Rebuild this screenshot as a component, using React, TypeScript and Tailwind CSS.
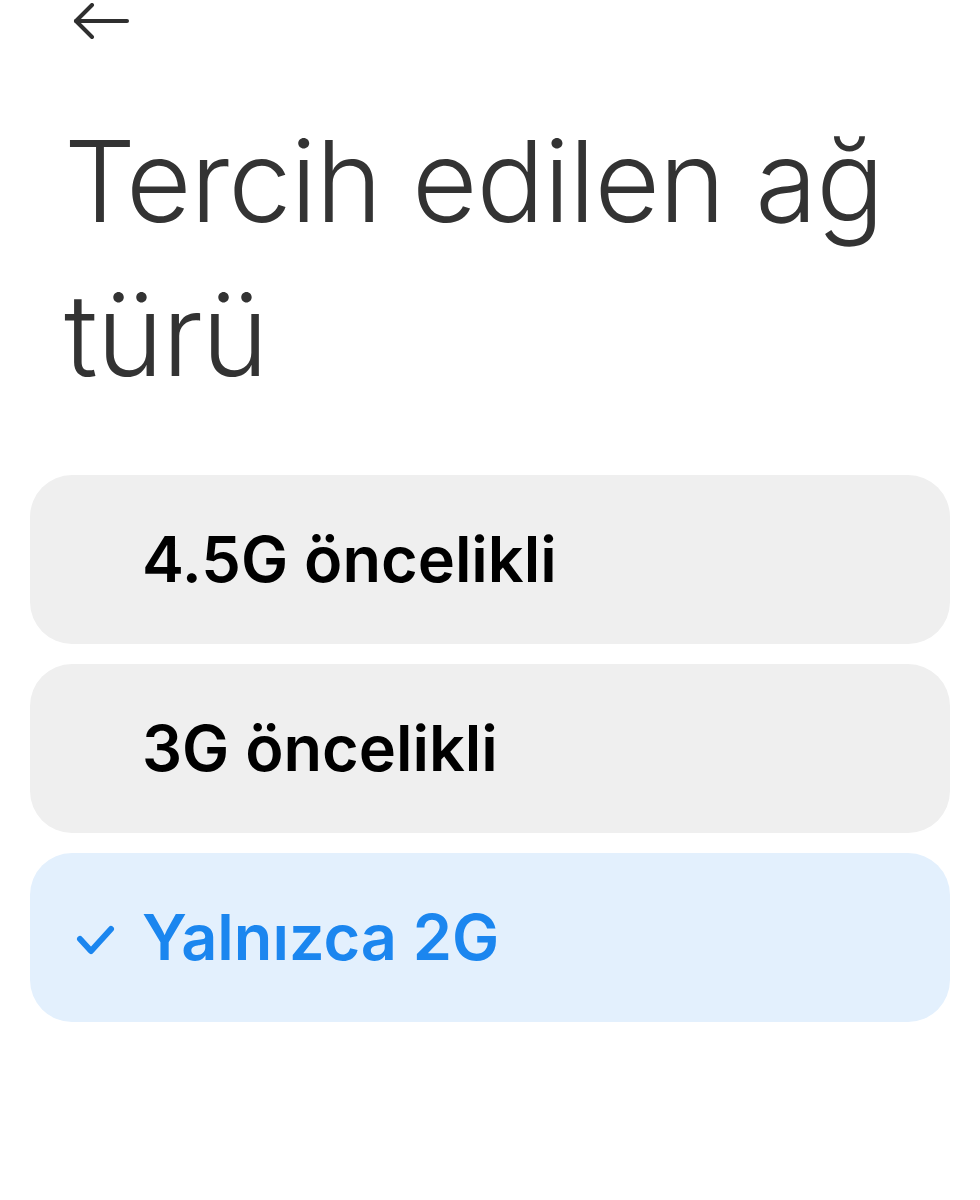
import React from "react";

const items = [
  { label: "4.5G öncelikli", selected: false },
  { label: "3G öncelikli", selected: false },
  { label: "Yalnızca 2G", selected: true },
];

export default function App() {
  return (
    <div className="w-[980px] h-[1200px] bg-white overflow-hidden" style={{ fontFamily: "Inter, 'Noto Sans', sans-serif" }}>
      <div className="pl-[73px] pt-[3px] h-[40px]">
        <svg width="58" height="38" viewBox="0 0 58 38" fill="none" stroke="#2f2f2f" strokeWidth="4" strokeLinecap="round" strokeLinejoin="round">
          <path d="M54 18H3" />
          <path d="M19 2L3 18L19 34" />
        </svg>
      </div>
      <h1 className="pl-[64px] pt-[64px] text-[113px] leading-[154px] font-light text-[#333333] tracking-[-1px]">
        Tercih edilen ağ türü
      </h1>
      <div className="mt-[63px] px-[30px] flex flex-col gap-[20px]">
        {items.map((it) => (
          <div
            key={it.label}
            className={`h-[169px] rounded-[42px] flex items-center ${it.selected ? "bg-[#e3f0fd]" : "bg-[#efefef]"}`}
          >
            <div className="w-[112px] flex justify-end pr-[26px] pt-[4px]">
              {it.selected && (
                <svg width="40" height="32" viewBox="0 0 40 32" fill="none" stroke="#1b86ef" strokeWidth="6" strokeLinecap="round" strokeLinejoin="round">
                  <path d="M4 15L15 27L35 5" />
                </svg>
              )}
            </div>
            <span className={`text-[63px] font-semibold ${it.selected ? "text-[#1b86ef]" : "text-black"}`}>
              {it.label}
            </span>
          </div>
        ))}
      </div>
    </div>
  );
}
